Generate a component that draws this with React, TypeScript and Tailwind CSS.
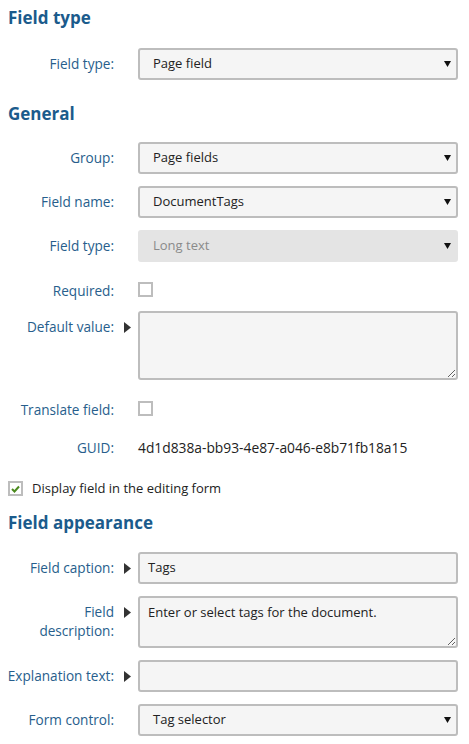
import React from 'react';

const font = { fontFamily: '"Open Sans", "Noto Sans", sans-serif' };

const Arrow: React.FC = () => (
  <svg width="7" height="11" viewBox="0 0 7 11" className="mt-[11px]">
    <path d="M0 0 L7 5.5 L0 11 Z" fill="#333" />
  </svg>
);

const Caret: React.FC = () => (
  <svg width="7" height="6" viewBox="0 0 7 6">
    <path d="M0 0 H7 L3.5 6 Z" fill="#111" />
  </svg>
);

type RowProps = { label: React.ReactNode; arrow?: boolean; children: React.ReactNode; className?: string };

const Row: React.FC<RowProps> = ({ label, arrow, children, className = 'mb-3' }) => (
  <div className={`flex ${className}`}>
    <div className="w-[114px] shrink-0 text-right text-[13.6px] leading-[19px] pt-[6px] text-[#275e8c]">{label}</div>
    <div className="w-[24px] shrink-0 flex justify-center pl-[3px]">{arrow && <Arrow />}</div>
    <div className="flex-1 mr-[11px]">{children}</div>
  </div>
);

const Select: React.FC<{ value: string; disabled?: boolean }> = ({ value, disabled }) => (
  <div
    className={`h-[32px] flex items-center justify-between pl-[13px] pr-[5px] rounded-[3px] border-2 text-[13px] ${
      disabled ? 'bg-[#e4e4e4] border-[#e4e4e4] text-[#8a8a8a]' : 'bg-[#f5f5f5] border-[#bdbdbd] text-[#222]'
    }`}
  >
    <span>{value}</span>
    <Caret />
  </div>
);

const Input: React.FC<{ value?: string }> = ({ value = '' }) => (
  <div className="h-[32px] flex items-center px-[8px] rounded-[3px] border-2 border-[#bdbdbd] bg-[#f5f5f5] text-[13px] text-[#222]">
    {value}
  </div>
);

const TextArea: React.FC<{ value?: string; h: string }> = ({ value = '', h }) => (
  <textarea
    readOnly
    value={value}
    className={`${h} block w-full px-[8px] py-[5px] rounded-[3px] border-2 border-[#bdbdbd] bg-[#f5f5f5] text-[13px] leading-[19px] text-[#222] outline-none`}
    style={font}
  />
);

const Check: React.FC<{ checked?: boolean }> = ({ checked }) => (
  <div className="w-[15px] h-[15px] border-2 border-[#bdbdbd] bg-white flex items-center justify-center">
    {checked && (
      <svg width="9" height="8" viewBox="0 0 9 8">
        <path d="M1 4 L3.5 6.5 L8 1.5" fill="none" stroke="#4b8a1e" strokeWidth="2" />
      </svg>
    )}
  </div>
);

const Heading: React.FC<{ children: React.ReactNode; className?: string }> = ({ children, className }) => (
  <h2 className={`pl-[8px] text-[17px] font-bold text-[#1b5b8c] leading-[24px] ${className}`}>{children}</h2>
);

export default function App() {
  return (
    <div className="w-[469px] h-[744px] bg-white overflow-hidden" style={font}>
      <Heading className="pt-[6px] mb-[18px]">Field type</Heading>
      <Row label="Field type:" className="mb-[22px]">
        <Select value="Page field" />
      </Row>

      <Heading className="mb-[16px]">General</Heading>
      <Row label="Group:">
        <Select value="Page fields" />
      </Row>
      <Row label="Field name:">
        <Select value="DocumentTags" />
      </Row>
      <Row label="Field type:" className="mb-[13px]">
        <Select value="Long text" disabled />
      </Row>
      <Row label="Required:" className="mb-[11px]">
        <div className="pt-[7px] h-[22px]">
          <Check />
        </div>
      </Row>
      <Row label="Default value:" arrow className="mb-[14px]">
        <TextArea h="h-[69px]" />
      </Row>
      <Row label="Translate field:" className="mb-[13px]">
        <div className="pt-[7px] h-[22px]">
          <Check />
        </div>
      </Row>
      <Row label="GUID:" className="mb-[22px]">
        <div className="pt-[6px] leading-[19px] text-[13.8px] text-[#222]">4d1d838a-bb93-4e87-a046-e8b71fb18a15</div>
      </Row>

      <div className="flex items-center gap-[9px] pl-[8px] mb-[12px] text-[13px] text-[#222]">
        <Check checked />
        <span>Display field in the editing form</span>
      </div>

      <Heading className="mb-[17px]">Field appearance</Heading>
      <Row label="Field caption:" arrow>
        <Input value="Tags" />
      </Row>
      <Row label={<>Field<br />description:</>} arrow>
        <TextArea h="h-[52px]" value="Enter or select tags for the document." />
      </Row>
      <Row label="Explanation text:" arrow>
        <Input />
      </Row>
      <Row label="Form control:">
        <Select value="Tag selector" />
      </Row>
    </div>
  );
}
